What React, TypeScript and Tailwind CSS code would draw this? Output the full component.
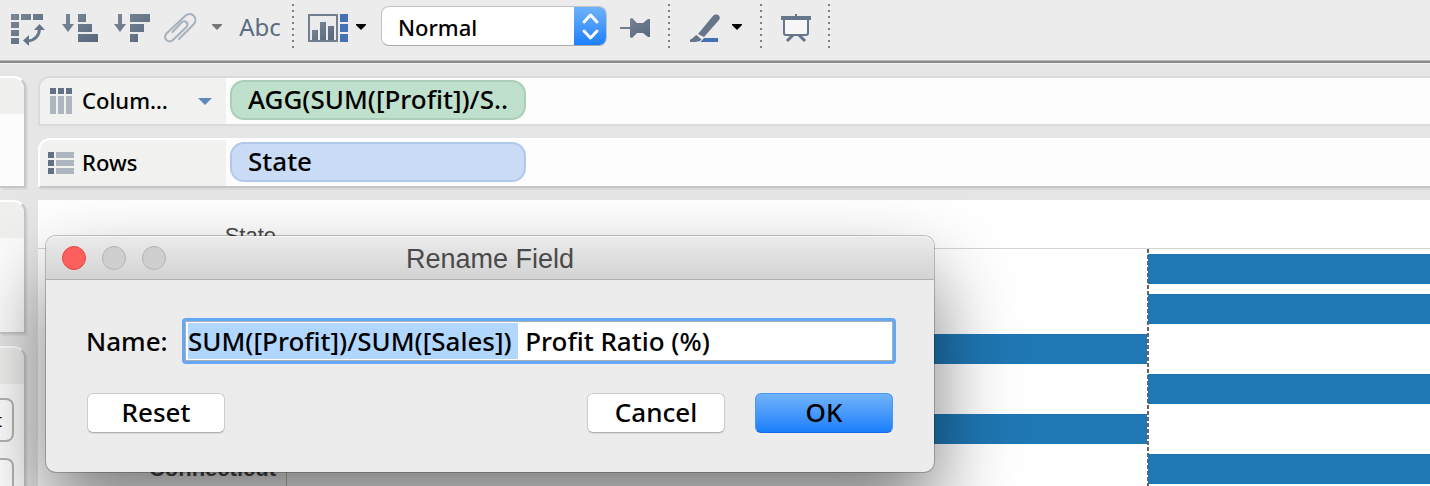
import { useEffect, useRef, useState } from 'react';
import type { ReactNode } from 'react';

const SLATE = '#667589';

function Separator() {
  return (
    <div
      aria-hidden="true"
      className="mx-1 h-11 w-0.5 shrink-0 bg-[repeating-linear-gradient(to_bottom,#808080_0px,#808080_2px,transparent_2px,transparent_6px)]"
    />
  );
}

function Tool({ label, x, w, children }: { label: string; x: number; w: number; children: ReactNode }) {
  return (
    <button type="button" aria-label={label} className="h-11 shrink-0">
      <svg width={w} height={44} viewBox={`${x} 4 ${w} 44`} fill={SLATE} aria-hidden="true">
        <defs>
          <linearGradient id="slate" x1="0" y1="0" x2="1" y2="1">
            <stop offset="0" stopColor="#7b8896" />
            <stop offset="1" stopColor="#57677d" />
          </linearGradient>
        </defs>
        {children}
      </svg>
    </button>
  );
}

function Toolbar() {
  return (
    <header className="shrink-0 border-b-2 border-[#8a8a8a] bg-[#ececec] shadow-[0_1px_0_#f0f0f0]">
      <div className="flex items-center border-b border-[#bcbcbc] pt-1 pb-3 pl-1">
        <Tool label="Swap rows and columns" x={4} w={50}>
          <path fill="url(#slate)" d="M11 14h8v6h-8zM21 14h10v6H21zM33 14h10v6H33zM11 22h8v6h-8zM11 30h8v6h-8zM11 38h8v6h-8z" />
          <path d="M28 41C36 40 39 36 39.500 29" fill="none" stroke={SLATE} strokeWidth="3" />
          <path d="M34 30h11l-5.500-6zM29 35v11l-6-5.500z" />
        </Tool>
        <Tool label="Sort ascending" x={54} w={52}>
          <path fill="url(#slate)" d="M66 14h4v10h4l-6 8-6-8h4zM78 14h8v8h-8zM78 24h14v8H78zM78 34h20v8H78z" />
        </Tool>
        <Tool label="Sort descending" x={106} w={52}>
          <path fill="url(#slate)" d="M118 14h4v10h4l-6 8-6-8h4zM130 14h20v8h-20zM130 24h14v8h-14zM130 34h8v8h-8z" />
        </Tool>
        <Tool label="Group members" x={158} w={46}>
          <path
            d="M179 39L193.500 24.500C199 18 191.500 10.500 185 16L166.500 33.500C162 39 169 44 173.500 39.500L186.500 27C189.500 23 184.500 19.500 181.500 22.500L172.500 32"
            fill="none"
            stroke="#a7b1bd"
            strokeWidth="2"
            strokeLinecap="round"
            strokeLinejoin="round"
          />
        </Tool>
        <Tool label="Group options" x={204} w={28}>
          <path d="M212 24h10v1l-5 5-5-5z" fill="#777776" />
        </Tool>
        <button type="button" className="h-11 w-14 shrink-0 pt-0.5 text-2xl text-[#5c6c82]">Abc</button>
        <Separator />
        <Tool label="Show mark labels" x={298} w={51}>
          <path d="M309 15h28v26h-28z" fill="none" stroke="#71808f" strokeWidth="2" />
          <path fill="url(#slate)" d="M312 30h6v10h-6zM320 22h6v18h-6zM328 26h6v14h-6z" />
          <path d="M340 14h8v8h-8zM340 24h8v8h-8zM340 34h8v8h-8z" fill="#4572b5" />
        </Tool>
        <Tool label="Show cards" x={349} w={24}>
          <path d="M356 24h10v1l-5 5-5-5z" fill="#000" />
        </Tool>
        <div className="relative mx-2 h-10 w-[226px] shrink-0 overflow-hidden rounded-lg border border-[#c3c3c3] border-b-[#a9a9a9] bg-white">
          <select aria-label="Fit" className="h-full w-full appearance-none pt-0.5 pl-4 text-[22px] font-medium text-black outline-none">
            <option>Normal</option>
          </select>
          <span className="pointer-events-none absolute -inset-y-px -right-px w-[33px] bg-linear-to-b from-[#6fb3f9] to-[#167efb]">
            <svg width="33" height="40" viewBox="0 0 33 40" fill="none" stroke="#fff" strokeWidth="3" aria-hidden="true">
              <path d="M10 16l6.500-7L23 16M10 25l6.500 7L23 25" strokeLinecap="round" strokeLinejoin="round" />
            </svg>
          </span>
        </div>
        <Tool label="Fix axes" x={615} w={49}>
          <path fill="url(#slate)" d="M620 27h10v-8l2-1 5 5h6l5-4h2v18h-2l-5-4h-6l-5 5-2-1v-8h-10z" />
        </Tool>
        <Separator />
        <Tool label="Highlight" x={674} w={52}>
          <path d="M698 34L712.500 16.500C716 12 722 16 719 20L704 37z" />
          <path d="M696.500 35l5 4.500c-1.500 2-4 2.500-11.500 2.500v-2.500c3-.5 4-3.500 6.500-4.500z" />
          <path d="M704 38h14v4h-17.500z" fill="#4572b5" />
        </Tool>
        <Tool label="Highlight options" x={726} w={30}>
          <path d="M732 24h10v1l-5 5-5-5z" fill="#000" />
        </Tool>
        <Separator />
        <Tool label="Presentation mode" x={766} w={58}>
          <path d="M784 19v14q0 2 2 2h20q2 0 2-2V19z" fill="#f7f7f7" stroke={SLATE} strokeWidth="2" />
          <path d="M781 16h14v-2h2v2h14v4h-30z" />
          <path d="M793 35l-6 6M799 35l6 6" stroke={SLATE} strokeWidth="3" />
        </Tool>
        <Separator />
      </div>
    </header>
  );
}

const cardBase =
  'w-[26px] shrink-0 rounded-tr-xl border-r-2 border-b-2 border-t-2 border-t-white border-r-[#c6c6c6] border-b-[#c6c6c6] bg-[#fcfcfc] shadow-[2px_2px_0_#dadada] overflow-hidden';

function SideCards() {
  return (
    <aside className="flex w-[38px] shrink-0 flex-col gap-3">
      <div className={`${cardBase} h-28`}>
        <div className="h-9 bg-[#f0f0ee]" />
      </div>
      <div className={`${cardBase} h-[134px]`}>
        <div className="h-9 bg-[#f0f0ee]" />
      </div>
      <div className={`${cardBase} h-44`}>
        <div className="h-9 bg-[#f0f0ee]" />
        <div className="mt-3.5 flex flex-col gap-4 pr-2.5">
          <div className="flex h-11 items-center justify-end rounded-r-lg border-2 border-l-0 border-[#b5b5b5] bg-white pr-2.5 text-lg">
            t
          </div>
          <div className="h-11 rounded-r-lg border-2 border-l-0 border-[#b5b5b5] bg-white" />
        </div>
      </div>
    </aside>
  );
}

function Shelf({ title, icon, arrow, outline, children }: { title: string; icon: ReactNode; arrow?: boolean; outline: string; children: ReactNode }) {
  return (
    <section className={`flex h-[50px] shrink-0 overflow-hidden rounded-tl-xl border-y-2 border-l-2 bg-[#fdfdfd] ${outline}`}>
      <div className="flex w-[186px] shrink-0 items-center bg-[#f1f1ef]">
        <svg width="42" height="46" viewBox="40 0 42 46" className="shrink-0" aria-hidden="true">
          {icon}
        </svg>
        <h2 className="grow pb-0.5 text-[22px] font-medium text-black">{title}</h2>
        {arrow && (
          <button type="button" aria-label={`${title} menu`} className="mr-3.5">
            <svg width="14" height="8" viewBox="0 0 14 8" aria-hidden="true">
              <path d="M0 1h14L7 8z" fill="#5f89b8" />
            </svg>
          </button>
        )}
      </div>
      <div className="flex grow items-start pt-0.5 pl-1">{children}</div>
    </section>
  );
}

const pill = 'flex h-10 w-[296px] items-center rounded-[14px] border-2 pb-0.5 pl-4 text-[26px] font-medium whitespace-nowrap text-black';

const bars = [
  { name: '', positive: true },
  { name: '', positive: true },
  { name: '', positive: false },
  { name: '', positive: true },
  { name: '', positive: false },
  { name: 'Connecticut', positive: true },
];

function Worksheet() {
  return (
    <section className="flex grow flex-col bg-white font-['Liberation_Sans',sans-serif] text-[22px] text-[#4b4b4b]">
      <div className="flex h-[49px] shrink-0 items-end border-b border-[#d4d4d4]">
        <div className="w-[248px] pr-2.5 text-right leading-6">State</div>
      </div>
      <div className="flex grow">
        <div className="flex w-[249px] shrink-0 flex-col border-r border-[#c8c8c8]">
          {bars.map((b, i) => (
            <div key={i} className="h-10 pr-2.5 text-right leading-10 font-bold">{b.name}</div>
          ))}
        </div>
        <div className="w-[860px] shrink-0">
          {bars.map((b, i) => (
            <div key={i} className="flex h-10 items-center">
              {!b.positive && <div className="h-[30px] grow bg-[#1f77b4]" />}
            </div>
          ))}
        </div>
        <div className="w-0.5 shrink-0 bg-[repeating-linear-gradient(to_bottom,#666_0px,#666_4px,transparent_4px,transparent_6px)]">
          {bars.map((b, i) => (
            <div key={i} className="flex h-10 items-center justify-end">
              {b.positive && <div className="h-[30px] w-px bg-[#1f77b4]" />}
            </div>
          ))}
        </div>
        <div className="grow">
          {bars.map((b, i) => (
            <div key={i} className="flex h-10 items-center">
              {b.positive && <div className="h-[30px] grow bg-[#1f77b4]" />}
            </div>
          ))}
        </div>
      </div>
    </section>
  );
}

const buttonBase = 'h-10 w-[138px] rounded-md border pb-0.5 text-[26px] leading-8 font-medium text-black';
const plainButton = `${buttonBase} border-[#cdcdcd] border-b-[#b0b0b0] bg-white shadow-[0_1px_1px_rgba(0,0,0,0.08)]`;

function RenameDialog() {
  const input = useRef<HTMLInputElement>(null);
  const [name, setName] = useState('SUM([Profit])/SUM([Sales])  Profit Ratio (%)');

  useEffect(() => {
    input.current?.focus();
    input.current?.setSelectionRange(0, 27);
  }, []);

  return (
    <div
      role="dialog"
      aria-labelledby="rename-title"
      className="absolute top-[236px] left-[46px] w-[888px] rounded-[10px] bg-[#ececec] shadow-[0_0_0_1px_rgba(0,0,0,0.22),0_40px_80px_rgba(0,0,0,0.52)]"
    >
      <div className="relative flex h-11 items-center justify-center rounded-t-[10px] border-b border-[#b1b1b1] bg-linear-to-b from-[#ebebeb] to-[#d3d3d3] shadow-[inset_0_1px_0_#f6f6f6]">
        <div className="absolute left-4 flex gap-4">
          <button type="button" aria-label="Close" className="size-6 rounded-full border border-[#e24640] bg-[#fd605c]" />
          <button type="button" aria-label="Minimize" disabled className="size-6 rounded-full border border-[#b3b3b3] bg-[#cfcfcf]" />
          <button type="button" aria-label="Zoom" disabled className="size-6 rounded-full border border-[#b3b3b3] bg-[#cfcfcf]" />
        </div>
        <h1 id="rename-title" className="pt-0.5 font-['Liberation_Sans',sans-serif] text-[27px] leading-9 text-[#4a4a4a]">Rename Field</h1>
      </div>
      <form className="pt-[38px] pr-[38px] pb-[39px] pl-10" onSubmit={(e) => e.preventDefault()}>
        <div className="flex items-center">
          <label htmlFor="field-name" className="w-24 shrink-0 text-[26px] font-medium text-black">Name:</label>
          <div className="grow rounded-sm bg-[#64a8f5] p-[3px]">
            <input
              ref={input}
              id="field-name"
              value={name}
              onChange={(e) => setName(e.target.value)}
              spellCheck={false}
              className="block h-10 w-full border border-[#a9aeb5] bg-white px-0.5 text-[26px] leading-8 font-medium text-black outline-none selection:bg-[#b2d7ff] selection:text-black"
            />
          </div>
        </div>
        <div className="mt-[29px] flex pr-[3px] pl-px">
          <button type="button" className={plainButton}>Reset</button>
          <button type="button" className={`${plainButton} ml-auto`}>Cancel</button>
          <button
            type="submit"
            className={`${buttonBase} ml-[30px] border-[#4c96f0] border-b-[#1569e8] bg-linear-to-b from-[#6fb3f9] to-[#167efb]`}
          >
            OK
          </button>
        </div>
      </form>
    </div>
  );
}

export default function App() {
  return (
    <div className="relative flex h-screen flex-col overflow-hidden bg-[#e6e6e6] font-['Noto_Sans',sans-serif]">
      <Toolbar />
      <div className="flex min-h-0 grow pt-[13px]">
        <SideCards />
        <main className="flex min-w-0 grow flex-col gap-3">
          <Shelf
            title="Colum…"
            arrow
            outline="border-[#dadada]"
            icon={
              <>
                <path d="M50 10h6v6h-6zM58 10h6v6h-6zM66 10h6v6h-6z" fill="#627085" />
                <path d="M50 18h6v18h-6zM58 18h6v18h-6zM66 18h6v18h-6z" fill="#adb5be" />
              </>
            }
          >
            <div className={`${pill} border-[#abceb9] bg-[#bfe0cc]`}>AGG(SUM([Profit])/S..</div>
          </Shelf>
          <Shelf
            title="Rows"
            outline="border-t-white border-l-white border-b-[#c6c6c6] shadow-[2px_2px_0_#dadada]"
            icon={
              <>
                <path d="M48 12h6v6h-6zM48 20h6v6h-6zM48 28h6v6h-6z" fill="#627085" />
                <path d="M56 12h18v6H56zM56 20h18v6H56zM56 28h18v6H56z" fill="#adb5be" />
              </>
            }
          >
            <div className={`${pill} border-[#b2c8ea] bg-[#cadbf5]`}>State</div>
          </Shelf>
          <Worksheet />
        </main>
      </div>
      <RenameDialog />
    </div>
  );
}
